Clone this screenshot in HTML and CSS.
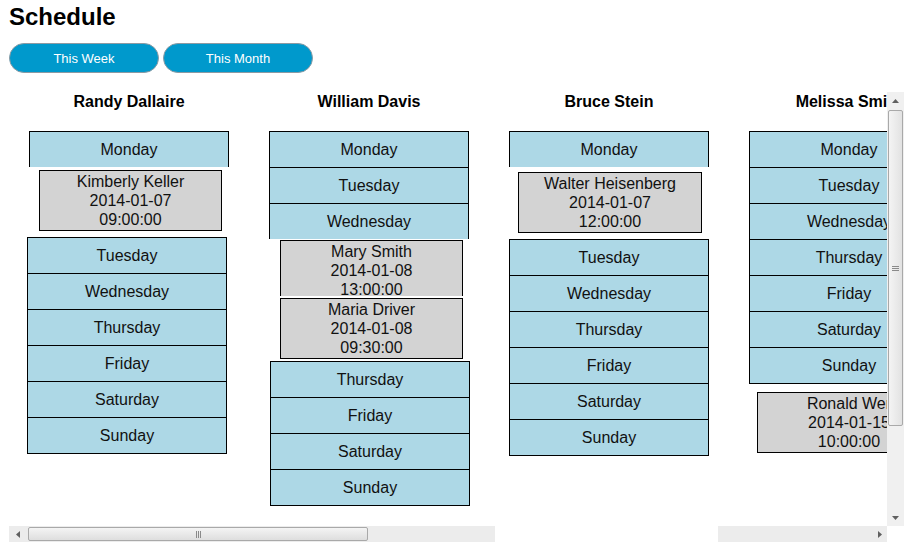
FILE: index.html
```html
<!DOCTYPE html>
<html>
<head>
<meta charset="utf-8">
<title>Schedule</title>
<link rel="stylesheet" href="styles.css">
</head>
<body>
<div class="page">
  <h2 class="title">Schedule</h2>
  <div class="buttons">
    <button class="btn">This Week</button>
    <button class="btn">This Month</button>
  </div>
  <div class="viewport">
    <div class="content">
      <div class="board">
        <div class="col">
          <div class="name">Randy Dallaire</div>
          <div class="days open ml20"><div class="day">Monday</div></div>
          <div class="appt c1a">Kimberly Keller<br>2014-01-07<br>09:00:00</div>
          <div class="days c1b">
            <div class="day">Tuesday</div><div class="day">Wednesday</div><div class="day">Thursday</div>
            <div class="day">Friday</div><div class="day">Saturday</div><div class="day">Sunday</div>
          </div>
        </div>
        <div class="col">
          <div class="name">William Davis</div>
          <div class="days open ml20">
            <div class="day">Monday</div><div class="day">Tuesday</div><div class="day">Wednesday</div>
          </div>
          <div class="appt c2a">Mary Smith<br>2014-01-08<br>13:00:00</div>
          <div class="appt c2b">Maria Driver<br>2014-01-08<br>09:30:00</div>
          <div class="days c2c">
            <div class="day">Thursday</div><div class="day">Friday</div><div class="day">Saturday</div><div class="day">Sunday</div>
          </div>
        </div>
        <div class="col">
          <div class="name">Bruce Stein</div>
          <div class="days open ml20"><div class="day">Monday</div></div>
          <div class="appt c3a">Walter Heisenberg<br>2014-01-07<br>12:00:00</div>
          <div class="days c3b">
            <div class="day">Tuesday</div><div class="day">Wednesday</div><div class="day">Thursday</div>
            <div class="day">Friday</div><div class="day">Saturday</div><div class="day">Sunday</div>
          </div>
        </div>
        <div class="col">
          <div class="name">Melissa Smith</div>
          <div class="days ml20">
            <div class="day">Monday</div><div class="day">Tuesday</div><div class="day">Wednesday</div>
            <div class="day">Thursday</div><div class="day">Friday</div><div class="day">Saturday</div><div class="day">Sunday</div>
          </div>
          <div class="appt c4a">Ronald Wer<br>2014-01-15<br>10:00:00</div>
        </div>
      </div>
    </div>
    <div class="vbar">
      <div class="varrow"><svg width="7" height="4" viewBox="0 0 7 4"><path d="M3.5 0 L7 4 L0 4 Z" fill="#606060"/></svg></div>
      <div class="vthumb"><span class="hgrip"></span><span class="hgrip"></span><span class="hgrip"></span></div>
      <div class="vspace"></div>
      <div class="varrow"><svg width="7" height="4" viewBox="0 0 7 4"><path d="M0 0 L7 0 L3.5 4 Z" fill="#606060"/></svg></div>
    </div>
    <div class="hbar">
      <div class="hseg first">
        <div class="harrow"><svg width="4" height="7" viewBox="0 0 4 7"><path d="M4 0 L4 7 L0 3.5 Z" fill="#606060"/></svg></div>
        <div class="hthumb"><span class="vgrip"></span><span class="vgrip"></span><span class="vgrip"></span></div>
      </div>
      <div class="hgap"></div>
      <div class="hseg last">
        <div class="harrow"><svg width="4" height="7" viewBox="0 0 4 7"><path d="M0 0 L4 3.5 L0 7 Z" fill="#606060"/></svg></div>
      </div>
    </div>
    <div class="corner"></div>
  </div>
</div>
</body>
</html>
```

FILE: styles.css
```css
* { box-sizing: border-box; }
html, body { margin: 0; padding: 0; background: #fff; }
body { font-family: "Liberation Sans", Arial, sans-serif; color: #000; }

.page { padding-left: 9px; }

.title {
  margin: 3px 0 0;
  font-size: 24px;
  font-weight: bold;
  line-height: 28px;
}

.buttons {
  display: flex;
  gap: 4px;
  margin-top: 12px;
}
.btn {
  width: 150px;
  height: 30px;
  padding: 0;
  border: 1px solid #8c9aa3;
  border-radius: 15px;
  background: #0099cc;
  color: #fff;
  font-family: "Liberation Sans", Arial, sans-serif;
  font-size: 13px;
}

.viewport {
  margin-top: 19px;
  width: 895px;
  display: grid;
  grid-template-columns: 878px 17px;
  grid-template-rows: 434px 16px;
}
.content { overflow: hidden; }
.board { display: flex; }
.col { flex: 0 0 240px; display: flex; flex-direction: column; align-items: flex-start; }

.name {
  width: 200px;
  margin: 1px 0 20px 20px;
  text-align: center;
  font-size: 16px;
  font-weight: bold;
  line-height: 18px;
  height: 18px;
  white-space: nowrap;
}

.days {
  width: 200px;
  border: 1px solid #000;
  background: #add8e6;
  flex-shrink: 0;
}
.days.open { border-bottom: 0; }
.day {
  height: 35px;
  line-height: 35px;
  text-align: center;
  font-size: 16px;
  color: #111;
  white-space: nowrap;
}
.day + .day { height: 36px; border-top: 1px solid #000; }

.ml20 { margin-left: 20px; }

.appt {
  width: 184px;
  border: 1px solid #000;
  background: #d3d3d3;
  padding: 1px 0;
  text-align: center;
  font-size: 16px;
  line-height: 19px;
  color: #111;
  white-space: nowrap;
  overflow: hidden;
  flex-shrink: 0;
}

.c1a { margin: 3px 0 0 30px; width: 183px; }
.c1b { margin: 6px 0 0 18px; }
.c2a { margin: 1px 0 0 31px; width: 183px; height: 56px; border-bottom: 0; }
.c2b { margin: 2px 0 0 31px; width: 183px; }
.c2c { margin: 2px 0 0 21px; }
.c3a { margin: 5px 0 0 29px; }
.c3b { margin: 6px 0 0 20px; }
.c4a { margin: 8px 0 0 28px; }

/* vertical scrollbar */
.vbar {
  grid-column: 2;
  grid-row: 1;
  background: #f0f0f0;
  display: flex;
  flex-direction: column;
}
.varrow {
  height: 17px;
  display: flex;
  align-items: center;
  justify-content: center;
  flex-shrink: 0;
}
.vthumb {
  height: 316px;
  margin: 1px 1px 0;
  border: 1px solid #a9a9a9;
  border-radius: 2px;
  background: linear-gradient(to right, #f4f4f4, #e2e2e2);
  display: flex;
  flex-direction: column;
  align-items: center;
  justify-content: center;
  gap: 1px;
}
.hgrip { width: 7px; height: 1px; background: #8a8a8a; }
.vspace { flex: 1; }

/* horizontal scrollbar */
.hbar {
  grid-column: 1;
  grid-row: 2;
  display: flex;
}
.hseg {
  background: #ececec;
  display: flex;
  align-items: center;
}
.hseg.first { width: 486px; }
.hseg.last { flex: 1; justify-content: flex-end; }
.hgap { width: 223px; background: #fff; }
.harrow {
  width: 17px;
  height: 16px;
  display: flex;
  align-items: center;
  justify-content: center;
  flex-shrink: 0;
}
.hseg.last .harrow { width: 14px; }
.hthumb {
  width: 340px;
  height: 14px;
  margin-left: 2px;
  border: 1px solid #a9a9a9;
  border-radius: 2px;
  background: linear-gradient(to bottom, #f4f4f4, #dedede);
  display: flex;
  align-items: center;
  justify-content: center;
  gap: 1px;
}
.vgrip { width: 1px; height: 7px; background: #8a8a8a; }

.corner { grid-column: 2; grid-row: 2; background: #fff; }
```
